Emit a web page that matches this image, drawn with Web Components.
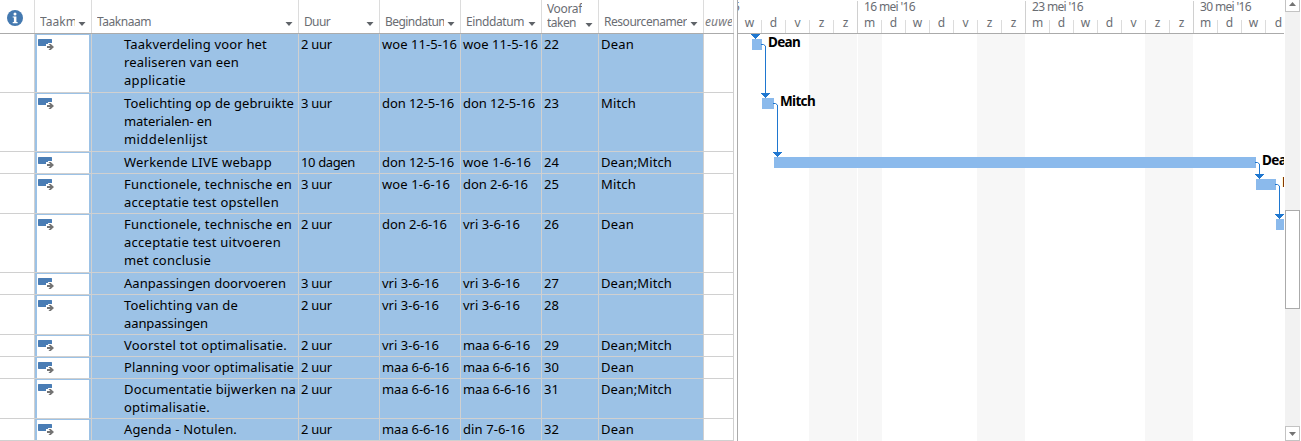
<!DOCTYPE html>
<html lang="nl">
<head>
<meta charset="utf-8">
<title>Planning</title>
<style>
html,body{margin:0;background:#fff;overflow:hidden}
body{font-family:"Noto Sans","Open Sans",sans-serif;width:1301px;height:441px}
</style>
</head>
<body>
<project-view></project-view>
<script>
const define=(name,cls)=>customElements.define(name,cls);
class Base extends HTMLElement{
  constructor(){super();this.attachShadow({mode:'open'});}
  connectedCallback(){this.shadowRoot.innerHTML=this.render();this.ready&&this.ready();}
}
/* One line of text, tracked to a given width */
define('fit-text',class extends Base{
  render(){return `<style>:host{display:block;white-space:pre}span{display:inline-block}</style><span><slot></slot></span>`;}
  ready(){
    const w=+this.getAttribute('w');if(!w)return;
    const s=this.shadowRoot.querySelector('span'),n=this.textContent.length;
    s.style.letterSpacing=((w-s.getBoundingClientRect().width)/n).toFixed(3)+'px';
  }
});
define('info-icon',class extends Base{
  render(){return `<style>:host{display:block;width:16px;height:16px}svg{display:block}</style>
  <svg width="16" height="16"><circle cx="8" cy="8" r="8" fill="#4479b0"/><circle cx="8" cy="3.9" r="1.5" fill="#fff"/><path d="M5.7 6.4H9.4V12H10.6V13.2H5.7V12H6.9V7.6H5.7Z" fill="#fff"/></svg>`;}
});
define('auto-task-icon',class extends Base{
  render(){return `<style>:host{display:block;width:17px;height:12px}svg{display:block}</style>
  <svg width="17" height="12"><path d="M0 .5L.5 0H13.5L14 .5V4H10V5H8V7H.5L0 6.5Z" fill="#4a7db5"/><path d="M9 7.1H12.3L10.4 5H12.8L16 8L12.8 11H10.4L12.3 8.9H9Z" fill="#737373"/></svg>`;}
});
define('column-head',class extends Base{
  render(){const a=this.hasAttribute('menu');return `<style>
  :host{display:flex;box-sizing:border-box;height:33px;border-right:1px solid #dcdcdc;align-items:flex-end;overflow:hidden;color:#6a6d73;font-size:12px;line-height:14px;padding:0 5px 4px 5px}
  .t{flex:1;min-width:0;overflow:hidden}svg{flex:none;margin:0 0 3px 3px;display:${a?'block':'none'}}</style>
  <div class="t"><slot></slot></div><svg width="8" height="4"><path d="M.5 0H7.5L4 4Z" fill="#5f6368"/></svg>`;}
});
define('task-row',class extends Base{
  render(){
    const g=n=>(this.getAttribute(n)||'').split('|').filter(Boolean).map(x=>{const [t,w]=x.split('~');return `<fit-text w="${w||''}">${t}</fit-text>`}).join('');
    return `<style>
    :host{display:grid;grid-template-columns:35px 57px 207px 81px 81px 81px 57px 105px 30px;box-sizing:border-box;height:${this.getAttribute('h')}px;font-size:13px;line-height:18px;color:#000}
    div{border-right:1px solid #d0d0d0;border-bottom:1px solid #d0d0d0;background:#9cc2e6;padding:1px 0 0 2px;min-width:0;overflow:hidden;box-sizing:border-box}
    .plain{background:#fff}.name{padding-left:32px}
    .mode{padding:1px 2px 0 2px}.mode section{background:#fff;height:100%;padding:4px 0 0 1px;box-sizing:border-box}
    </style>
    <div class="plain"></div><div class="mode"><section><auto-task-icon></auto-task-icon></section></div>
    <div class="name">${g('name')}</div><div>${g('dur')}</div><div>${g('start')}</div><div>${g('end')}</div><div>${g('pred')}</div><div>${g('res')}</div><div class="plain"></div>`;
  }
});
define('task-sheet',class extends Base{
  render(){
    const W={'2 uur':31,'3 uur':31,'10 dagen':54,'woe 11-5-16':75,'don 12-5-16':72,'woe 1-6-16':68,'don 2-6-16':65,'vri 3-6-16':57,'maa 6-6-16':67,'din 7-6-16':62,'Dean':33,'Mitch':35,'Dean;Mitch':71};
    const f=t=>t?t+'~'+(W[t]||15):'';
    const rows=[
    [59,'Taakverdeling voor het~143|realiseren van een~115|applicatie~62','2 uur','woe 11-5-16','woe 11-5-16','22','Dean'],
    [59,'Toelichting op de gebruikte~170|materialen- en~88|middelenlijst~84','3 uur','don 12-5-16','don 12-5-16','23','Mitch'],
    [22,'Werkende LIVE webapp~148','10 dagen','don 12-5-16','woe 1-6-16','24','Dean;Mitch'],
    [40,'Functionele, technische en~168|acceptatie test opstellen~155','3 uur','woe 1-6-16','don 2-6-16','25','Mitch'],
    [59,'Functionele, technische en~168|acceptatie test uitvoeren~157|met conclusie~87','2 uur','don 2-6-16','vri 3-6-16','26','Dean'],
    [22,'Aanpassingen doorvoeren~162','3 uur','vri 3-6-16','vri 3-6-16','27','Dean;Mitch'],
    [40,'Toelichting van de~114|aanpassingen~84','2 uur','vri 3-6-16','vri 3-6-16','28',''],
    [22,'Voorstel tot optimalisatie.~163','2 uur','vri 3-6-16','maa 6-6-16','29','Dean;Mitch'],
    [22,'Planning voor optimalisatie~170','2 uur','maa 6-6-16','maa 6-6-16','30','Dean'],
    [40,'Documentatie bijwerken na~172|optimalisatie.~86','2 uur','maa 6-6-16','maa 6-6-16','31','Dean;Mitch'],
    [22,'Agenda - Notulen.~113','2 uur','maa 6-6-16','din 7-6-16','32','Dean']];
    return `<style>
    :host{display:block;width:734px}
    header{display:grid;grid-template-columns:35px 57px 207px 81px 81px 81px 57px 105px 30px;height:34px;border-bottom:1px solid #ababab;box-sizing:border-box}
    .i{padding:0 0 7px 7px}.n{font-style:italic;padding:0 1px 4px 1px;color:#77797d}
    .v{padding-bottom:3px;padding-left:5px}
    </style>
    <header>
    <column-head class="i"><info-icon></info-icon></column-head>
    <column-head menu><fit-text w="37">Taakm</fit-text></column-head>
    <column-head menu><fit-text w="54">Taaknaam</fit-text></column-head>
    <column-head menu><fit-text w="26">Duur</fit-text></column-head>
    <column-head menu><fit-text w="64">Begindatum</fit-text></column-head>
    <column-head menu><fit-text w="58">Einddatum</fit-text></column-head>
    <column-head class="v" menu><fit-text w="35">Vooraf</fit-text><fit-text w="29">taken</fit-text></column-head>
    <column-head menu><fit-text w="83">Resourcenamer</fit-text></column-head>
    <column-head class="n"><fit-text w="28">euwe</fit-text></column-head>
    </header>
    ${rows.map(r=>`<task-row h="${r[0]}" name="${r[1]}" dur="${f(r[2])}" start="${f(r[3])}" end="${f(r[4])}" pred="${f(r[5])}" res="${f(r[6])}"></task-row>`).join('')}`;
  }
});
define('time-scale',class extends Base{
  render(){
    return `<style>
    :host{display:grid;grid-template-columns:120px 168px 168px 90px;width:546px;height:34px;box-sizing:border-box;border-bottom:1px solid #ababab;color:#6a6d73;font-size:12px;line-height:14px;overflow:hidden}
    section{display:flex;flex-direction:column;box-sizing:border-box;border-right:1px solid #d0d0d0;min-width:0;height:33px;border-image:linear-gradient(transparent 2px,#d0d0d0 2px) 1}
    section:last-child{border:0}
    .w{height:20px;padding-left:6px;box-sizing:border-box}.d{display:flex}
    b{font-weight:400;font-size:12px;line-height:5px;flex:none;width:24px;text-align:center;height:13px;box-sizing:border-box;border-right:1px solid #dcdcdc}
    b:last-child{border-color:transparent}.first{padding:0;margin-left:-5px}
    section:last-child b:last-child{padding-left:2px}
    </style>
    <section><div class="w first">5</div><div class="d">${[...'wdvzz'].map(c=>`<b>${c}</b>`).join('')}</div></section>
    ${['16','23','30'].map(n=>`<section><div class="w"><fit-text w="51">${n} mei '16</fit-text></div><div class="d">${[...(n==='30'?'mdwd':'mdwdvzz')].map(c=>`<b>${c}</b>`).join('')}</div></section>`).join('')}`;
  }
});
define('gantt-chart',class extends Base{
  render(){
    const bars=[[752,39,10],[762,98,12],[774,157,482],[1256,179,20],[1276,219,8]];
    const link=(x,y,x2,y2)=>`<path d="M${x-1} ${y}.5H${x+1.5}L${x2+.5} ${y+2}V${y2}" fill="none" stroke="#1f77d0"/>`;
    const tri=(x,y)=>`<path d="M${x-4} ${y}H${x+5}V${y+1}H${x+4}V${y+2}H${x+3}V${y+3}H${x+2}V${y+4}H${x+1}V${y+5}H${x}V${y+4}H${x-1}V${y+3}H${x-2}V${y+2}H${x-3}V${y+1}H${x-4}Z" fill="#1f77d0"/>`;
    return `<style>
    :host{display:block;position:relative;width:546px;height:407px;overflow:hidden;font-weight:bold;font-size:13.5px;line-height:16px;color:#000}
    svg{display:block}fit-text{position:absolute}
    </style>
    <svg width="546" height="407" viewBox="738 34 546 407" shape-rendering="crispEdges">
    <path d="M809 34h48v407h-48zM858 34h24v407h-24zM977 34h48v407h-48zM1145 34h48v407h-48z" fill="#f7f7f7"/>
    ${bars.map(b=>`<rect x="${b[0]}" y="${b[1]}" width="${b[2]}" height="11" fill="#8bbaec"/>`).join('')}
    <g shape-rendering="geometricPrecision">${link(762,44,765,94)}${link(774,103,777,153)}${link(1256,162,1259,175)}${link(1276,184,1279,215)}</g>
    ${tri(755,34)}${tri(765,93)}${tri(777,152)}${tri(1259,174)}${tri(1279,214)}
    </svg>
    <fit-text w="32" style="left:30px;top:0">Dean</fit-text>
    <fit-text w="35" style="left:42px;top:59px">Mitch</fit-text>
    <fit-text w="71" style="left:524px;top:118px">Dean;Mitch</fit-text>
    <fit-text w="36" style="left:544px;top:140px">Mitch</fit-text>`;
  }
});
define('scroll-bar',class extends Base{
  render(){return `<style>
    :host{display:flex;flex-direction:column;width:15px;height:441px;background:#f2f2f2}
    div{box-sizing:border-box;background:#fff;border:1px solid #c3c3c3;flex:none;display:flex;justify-content:center}
    .up{height:12px;border-top:0}.thumb{height:99px;margin:198px 0 117px;border-color:#ababab}.down{height:15px;align-items:center}
    .up svg{margin-top:2px}
    </style>
    <div class="up"><svg width="7" height="4"><path d="M3.5 0L7 4H0Z" fill="#737373"/></svg></div>
    <div class="thumb"></div>
    <div class="down"><svg width="7" height="4"><path d="M0 0H7L3.5 4Z" fill="#737373"/></svg></div>`;}
});
define('project-view',class extends Base{
  render(){return `<style>
    :host{display:flex;width:1301px;height:441px;overflow:hidden;background:#fff}
    .g{margin-left:3px;border-left:1px solid #ababab;width:546px;flex:none}scroll-bar{margin-left:1px}
    </style><task-sheet></task-sheet><div class="g"><time-scale></time-scale><gantt-chart></gantt-chart></div><scroll-bar></scroll-bar>`;}
});
</script>
</body>
</html>
